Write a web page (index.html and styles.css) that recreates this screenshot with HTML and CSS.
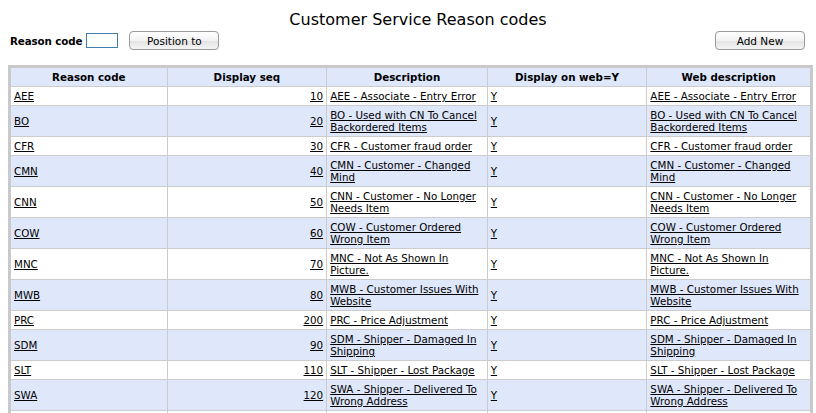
FILE: index.html
```html
<!DOCTYPE html>
<html lang="en">
<head>
    <meta charset="UTF-8">
    <title>Customer Service Reason codes</title>
    <link rel="stylesheet" href="styles.css">
</head>
<body>

    <h1 class="title">Customer Service Reason codes</h1>

    <!-- Search / add bar -->
    <div class="toolbar">
        <form class="search">
            <label for="code">Reason code</label>
            <input type="text" id="code" class="code-input">
            <button type="button" class="button">Position to</button>
        </form>
        <button type="button" class="button add">Add New</button>
    </div>

    <table class="codes">
        <colgroup>
            <col class="c-code">
            <col class="c-seq">
            <col class="c-desc">
            <col class="c-web">
            <col class="c-webdesc">
        </colgroup>
        <thead>
            <tr>
                <th>Reason code</th>
                <th>Display seq</th>
                <th>Description</th>
                <th>Display on web=Y</th>
                <th>Web description</th>
            </tr>
        </thead>
        <tbody>
            <tr>
                <td><a href="#">AEE</a></td>
                <td class="num"><a href="#">10</a></td>
                <td><a href="#">AEE - Associate - Entry Error</a></td>
                <td><a href="#">Y</a></td>
                <td><a href="#">AEE - Associate - Entry Error</a></td>
            </tr>
            <tr>
                <td><a href="#">BO</a></td>
                <td class="num"><a href="#">20</a></td>
                <td><a href="#">BO - Used with CN To Cancel Backordered Items</a></td>
                <td><a href="#">Y</a></td>
                <td><a href="#">BO - Used with CN To Cancel Backordered Items</a></td>
            </tr>
            <tr>
                <td><a href="#">CFR</a></td>
                <td class="num"><a href="#">30</a></td>
                <td><a href="#">CFR - Customer fraud order</a></td>
                <td><a href="#">Y</a></td>
                <td><a href="#">CFR - Customer fraud order</a></td>
            </tr>
            <tr>
                <td><a href="#">CMN</a></td>
                <td class="num"><a href="#">40</a></td>
                <td><a href="#">CMN - Customer - Changed Mind</a></td>
                <td><a href="#">Y</a></td>
                <td><a href="#">CMN - Customer - Changed Mind</a></td>
            </tr>
            <tr>
                <td><a href="#">CNN</a></td>
                <td class="num"><a href="#">50</a></td>
                <td><a href="#">CNN - Customer - No Longer Needs Item</a></td>
                <td><a href="#">Y</a></td>
                <td><a href="#">CNN - Customer - No Longer Needs Item</a></td>
            </tr>
            <tr>
                <td><a href="#">COW</a></td>
                <td class="num"><a href="#">60</a></td>
                <td><a href="#">COW - Customer Ordered Wrong Item</a></td>
                <td><a href="#">Y</a></td>
                <td><a href="#">COW - Customer Ordered Wrong Item</a></td>
            </tr>
            <tr>
                <td><a href="#">MNC</a></td>
                <td class="num"><a href="#">70</a></td>
                <td><a href="#">MNC - Not As Shown In Picture.</a></td>
                <td><a href="#">Y</a></td>
                <td><a href="#">MNC - Not As Shown In Picture.</a></td>
            </tr>
            <tr>
                <td><a href="#">MWB</a></td>
                <td class="num"><a href="#">80</a></td>
                <td><a href="#">MWB - Customer Issues With Website</a></td>
                <td><a href="#">Y</a></td>
                <td><a href="#">MWB - Customer Issues With Website</a></td>
            </tr>
            <tr>
                <td><a href="#">PRC</a></td>
                <td class="num"><a href="#">200</a></td>
                <td><a href="#">PRC - Price Adjustment</a></td>
                <td><a href="#">Y</a></td>
                <td><a href="#">PRC - Price Adjustment</a></td>
            </tr>
            <tr>
                <td><a href="#">SDM</a></td>
                <td class="num"><a href="#">90</a></td>
                <td><a href="#">SDM - Shipper - Damaged In Shipping</a></td>
                <td><a href="#">Y</a></td>
                <td><a href="#">SDM - Shipper - Damaged In Shipping</a></td>
            </tr>
            <tr>
                <td><a href="#">SLT</a></td>
                <td class="num"><a href="#">110</a></td>
                <td><a href="#">SLT - Shipper - Lost Package</a></td>
                <td><a href="#">Y</a></td>
                <td><a href="#">SLT - Shipper - Lost Package</a></td>
            </tr>
            <tr>
                <td><a href="#">SWA</a></td>
                <td class="num"><a href="#">120</a></td>
                <td><a href="#">SWA - Shipper - Delivered To Wrong Address</a></td>
                <td><a href="#">Y</a></td>
                <td><a href="#">SWA - Shipper - Delivered To Wrong Address</a></td>
            </tr>
            <tr class="cut">
                <td>&nbsp;</td>
                <td>&nbsp;</td>
                <td>&nbsp;</td>
                <td>&nbsp;</td>
                <td>&nbsp;</td>
            </tr>
        </tbody>
    </table>

</body>
</html>
```

FILE: styles.css
```css
body {
    margin: 0;
    padding: 0;
    font-family: "DejaVu Sans", Verdana, sans-serif;
    font-size: 10.3px;
    color: #000;
    background: #fff;
}

.title {
    margin: 0;
    padding-top: 10px;
    font-size: 16px;
    font-weight: normal;
    line-height: 19px;
    text-align: center;
    padding-left: 20px;
}

/* Search bar with Add New on the right */
.toolbar {
    display: flex;
    justify-content: space-between;
    align-items: center;
    padding: 2px 11px 0 10px;
    height: 19px;
}

.search {
    display: flex;
    align-items: center;
    margin: 0;
}

.search label {
    font-weight: bold;
    letter-spacing: -0.1px;
    margin-right: 4px;
}

.code-input {
    width: 28px;
    height: 13px;
    padding: 0 1px;
    margin: 0 11px 0 0;
    border: 1px solid #3f7fb0;
    font-size: 11px;
}

.button {
    height: 19px;
    width: 90px;
    padding: 0;
    font-family: "DejaVu Sans", Verdana, sans-serif;
    font-size: 10.5px;
    color: #000;
    border: 1px solid #9a9a9a;
    border-radius: 4px;
    background: linear-gradient(#ffffff, #f2f2f2 50%, #e2e2e2 51%, #f4f4f4);
}

/* Reason code table */
.codes {
    margin: 15px 0 0 8px;
    width: 805px;
    table-layout: fixed;
    border-collapse: collapse;
    border: 3px solid #c9c9c9;
}

.c-code { width: 157px; }
.c-seq { width: 159px; }
.c-desc { width: 160px; }
.c-web { width: 159px; }
.c-webdesc { width: 164px; }

.codes th,
.codes td {
    border: 1px solid #cccccc;
    padding: 3px 3px;
    line-height: 12px;
    vertical-align: middle;
    text-align: left;
}

.codes th {
    background: #dfe7fb;
    text-align: center;
    font-weight: bold;
}

.codes tbody tr:nth-child(even) {
    background: #dfe7fb;
}

.codes td.num {
    text-align: right;
}

.codes a {
    color: #000;
    text-decoration: underline;
}
```
